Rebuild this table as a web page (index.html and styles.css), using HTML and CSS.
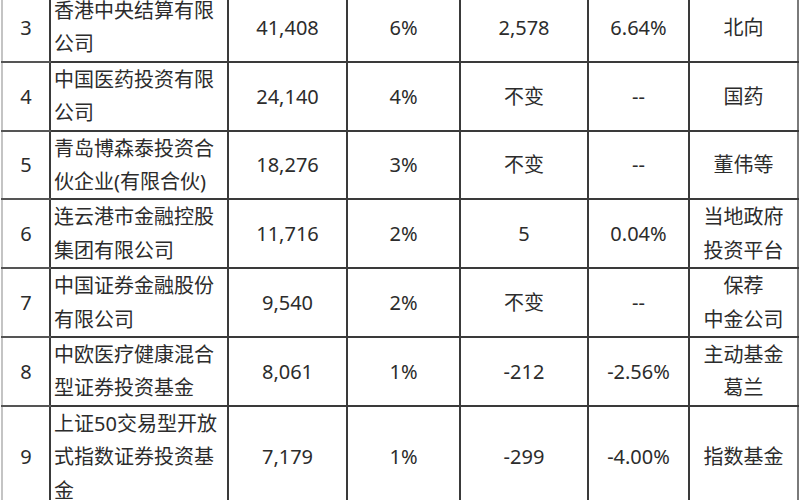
FILE: index.html
```html
<!DOCTYPE html>
<html lang="zh-CN">
<head>
<meta charset="utf-8">
<title>股东表</title>
<link rel="stylesheet" href="styles.css">
</head>
<body>
<table class="holders">
  <colgroup>
    <col class="c-no">
    <col class="c-name">
    <col class="c-shares">
    <col class="c-pct">
    <col class="c-chg">
    <col class="c-chgpct">
    <col class="c-note">
  </colgroup>
  <tbody>
    <tr>
      <td class="no">3</td>
      <td class="name">香港中央结算有限<br>公司</td>
      <td>41,408</td>
      <td>6%</td>
      <td>2,578</td>
      <td>6.64%</td>
      <td>北向</td>
    </tr>
    <tr>
      <td class="no">4</td>
      <td class="name">中国医药投资有限<br>公司</td>
      <td>24,140</td>
      <td>4%</td>
      <td>不变</td>
      <td>--</td>
      <td>国药</td>
    </tr>
    <tr>
      <td class="no">5</td>
      <td class="name">青岛博森泰投资合<br>伙企业(有限合伙)</td>
      <td>18,276</td>
      <td>3%</td>
      <td>不变</td>
      <td>--</td>
      <td>董伟等</td>
    </tr>
    <tr>
      <td class="no">6</td>
      <td class="name">连云港市金融控股<br>集团有限公司</td>
      <td>11,716</td>
      <td>2%</td>
      <td>5</td>
      <td>0.04%</td>
      <td>当地政府<br>投资平台</td>
    </tr>
    <tr>
      <td class="no">7</td>
      <td class="name">中国证券金融股份<br>有限公司</td>
      <td>9,540</td>
      <td>2%</td>
      <td>不变</td>
      <td>--</td>
      <td>保荐<br>中金公司</td>
    </tr>
    <tr>
      <td class="no">8</td>
      <td class="name">中欧医疗健康混合<br>型证券投资基金</td>
      <td>8,061</td>
      <td>1%</td>
      <td>-212</td>
      <td>-2.56%</td>
      <td>主动基金<br>葛兰</td>
    </tr>
    <tr>
      <td class="no">9</td>
      <td class="name">上证50交易型开放<br>式指数证券投资基<br>金</td>
      <td>7,179</td>
      <td>1%</td>
      <td>-299</td>
      <td>-4.00%</td>
      <td>指数基金</td>
    </tr>
  </tbody>
</table>
</body>
</html>
```

FILE: styles.css
```css
html, body {
  margin: 0;
  padding: 0;
  background: #ffffff;
  overflow: hidden;
}

.holders {
  margin-top: -8px;
  margin-left: 1px;
  width: 796px;
  table-layout: fixed;
  border-collapse: collapse;
  font-family: "Noto Sans", "Noto Sans CJK SC", sans-serif;
  font-size: 20px;
  color: #2c2c2c;
}

.c-no { width: 48px; }
.c-name { width: 178px; }
.c-shares { width: 119px; }
.c-pct { width: 113px; }
.c-chg { width: 128px; }
.c-chgpct { width: 101px; }
.c-note { width: 109px; }

.holders td {
  border: 2px solid #3a3a3a;
  padding: 0;
  line-height: 33.4px;
  text-align: center;
  vertical-align: middle;
  white-space: nowrap;
}

.holders td.no {
  border-left: 2px solid #c4c4c4;
  border-top-color: #555555;
  border-bottom-color: #555555;
}

.holders td.name {
  text-align: left;
  padding-left: 3px;
}

.holders td:last-child {
  border-right-color: #7a7a7a;
}
```
